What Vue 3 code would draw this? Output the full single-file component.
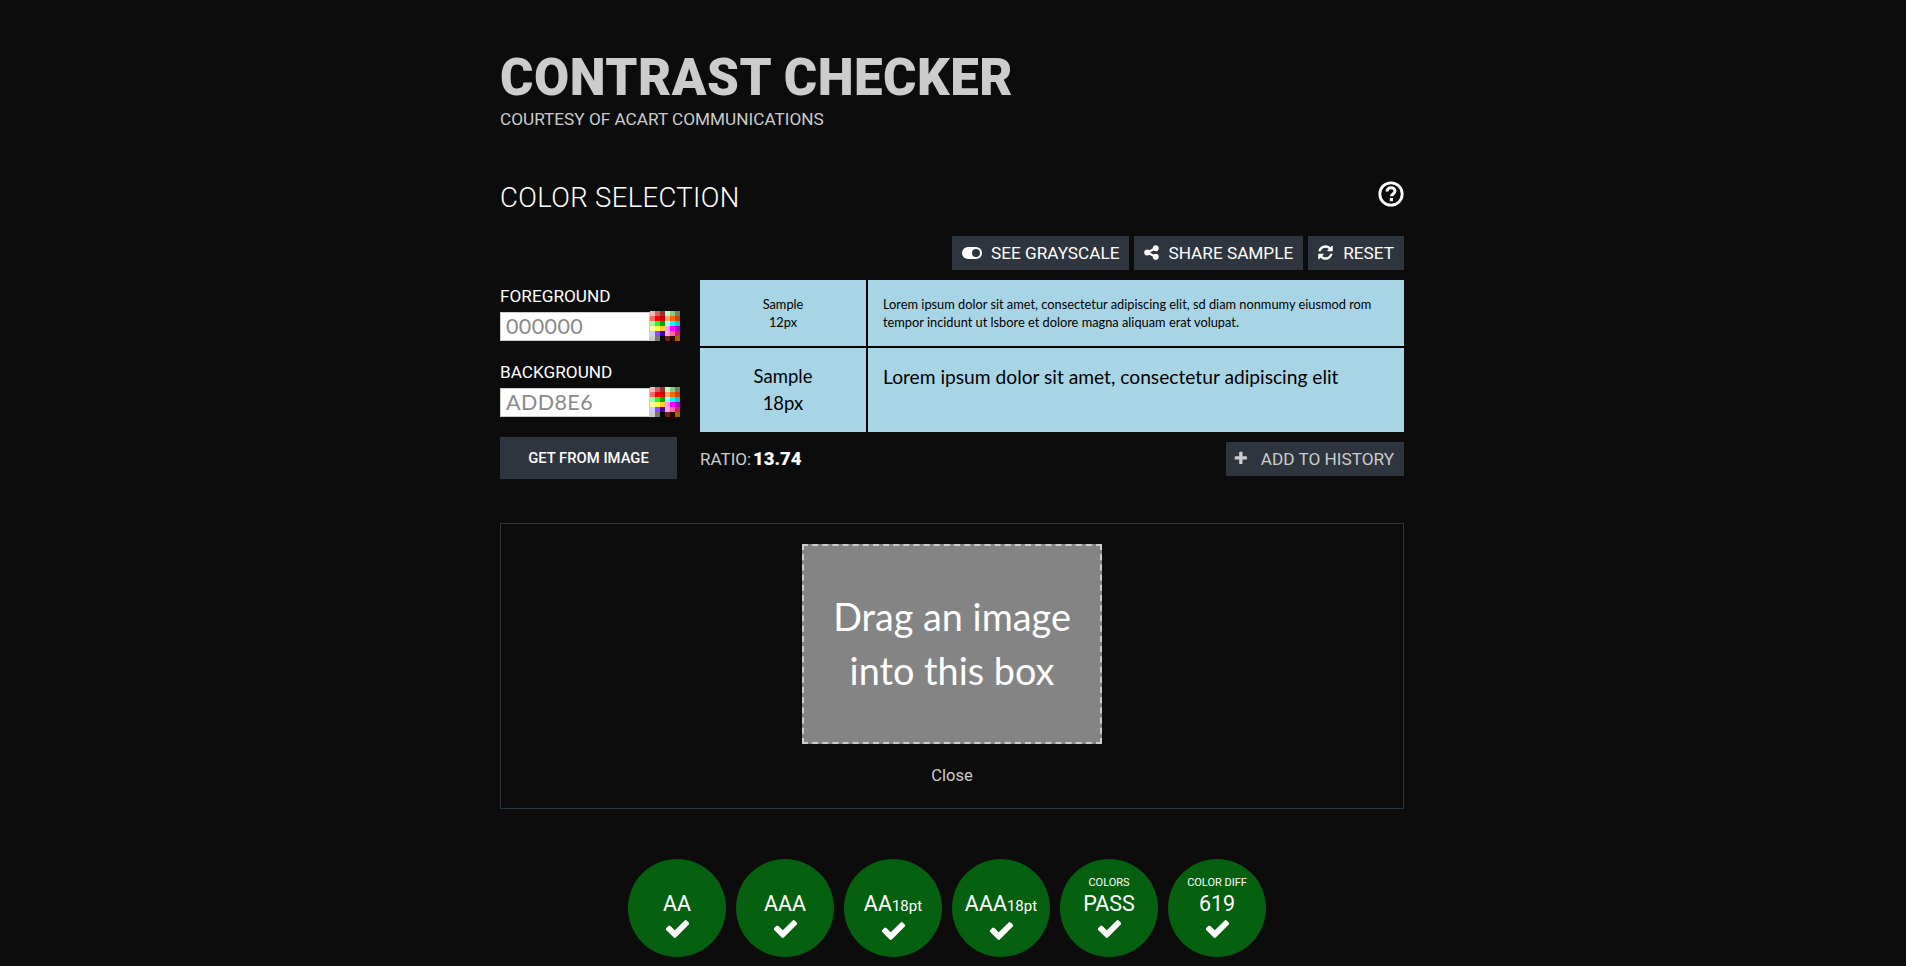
<script setup>
import { ref } from 'vue'

defineOptions({
  name: 'ContrastChecker'
})

const foreground = ref('')
const background = ref('')

// Palette behind the colour picker buttons
const palette = [
  '#f4b8b8', '#c96666', '#993333', '#bbffbb', '#88cc88', '#668866',
  '#ff6666', '#ff0000', '#cc0000', '#ffaa77', '#ff6600', '#cc4400',
  '#99ff99', '#33ee33', '#00aa00', '#aaffff', '#00ffff', '#00cccc',
  '#ffff99', '#ffff44', '#ffcc33', '#ff99ff', '#ff00ff', '#aa00cc',
  '#ccccff', '#9944ff', '#4400aa', '#ffaacc', '#ff66aa', '#cc2266',
  '#cccccc', '#777777', '#000000', '#662222', '#330000', '#996600'
]

const badges = [
  { label: 'AA' },
  { label: 'AAA' },
  { label: 'AA', small: '18pt' },
  { label: 'AAA', small: '18pt' },
  { top: 'COLORS', label: 'PASS' },
  { top: 'COLOR DIFF', label: '619' }
]

const checkPath = 'M1671 566q0 40-28 68l-724 724-136 136q-28 28-68 28t-68-28l-136-136-362-362q-28-28-28-68t28-68l136-136q28-28 68-28t68 28l294 295 656-657q28-28 68-28t68 28l136 136q28 28 28 68z'
</script>

<template>
  <div class="page">
    <header class="page-header">
      <h1>CONTRAST CHECKER</h1>
      <p>COURTESY OF ACART COMMUNICATIONS</p>
    </header>

    <div class="section-head">
      <h2>COLOR SELECTION</h2>
      <svg class="help-icon" viewBox="0 0 26 26" aria-label="Help">
        <circle cx="13" cy="13" r="11.2" fill="none" stroke="#fff" stroke-width="2.8" />
        <path d="M9 10.400c0-2.200 1.800-3.600 4-3.600s4 1.300 4 3.300c0 2.900-3.600 2.900-3.600 5.200" fill="none" stroke="#fff" stroke-width="3" />
        <rect x="11.800" y="17" width="3.200" height="3.200" fill="#fff" />
      </svg>
    </div>

    <div class="toolbar">
      <button type="button" class="btn">
        <svg class="toggle" viewBox="0 0 20 12">
          <rect width="20" height="12" rx="6" fill="#fff" />
          <circle cx="14" cy="6" r="4" fill="#2f353e" />
        </svg>
        SEE GRAYSCALE
      </button>
      <button type="button" class="btn">
        <svg class="btn-icon" viewBox="0 0 1792 1792">
          <path fill="#fff" d="M1344 1024q133 0 226.500 93.500t93.500 226.500-93.500 226.500-226.500 93.500-226.500-93.500-93.500-226.500q0-12 2-34l-360-180q-92 86-218 86-133 0-226.500-93.500t-93.500-226.500 93.500-226.500 226.500-93.500q126 0 218 86l360-180q-2-22-2-34 0-133 93.500-226.500t226.500-93.500 226.500 93.500 93.500 226.500-93.500 226.500-226.500 93.500q-126 0-218-86l-360 180q2 22 2 34t-2 34l360 180q92-86 218-86z" />
        </svg>
        SHARE SAMPLE
      </button>
      <button type="button" class="btn">
        <svg class="btn-icon reset-icon" viewBox="0 0 1792 1792">
          <path fill="#fff" d="M1639 1056q0 5-1 7-64 268-268 434.500t-478 166.500q-146 0-282.500-55t-243.500-157l-129 129q-19 19-45 19t-45-19-19-45v-448q0-26 19-45t45-19h448q26 0 45 19t19 45-19 45l-137 137q71 66 161 102t187 36q134 0 250-65t186-179q11-17 53-117 8-23 30-23h192q13 0 22.500 9.500t9.500 22.500zm25-800v448q0 26-19 45t-45 19h-448q-26 0-45-19t-19-45 19-45l138-138q-148-137-349-137-134 0-250 65t-186 179q-11 17-53 117-8 23-30 23h-199q-13 0-22.500-9.500t-9.500-22.500v-7q65-268 270-434.500t480-166.500q146 0 284 55.500t245 156.500l130-129q19-19 45-19t45 19 19 45z" />
        </svg>
        RESET
      </button>
    </div>

    <div class="workspace">
      <div class="pickers">
        <label class="field-label" for="fg">FOREGROUND</label>
        <div class="field">
          <input id="fg" v-model="foreground" class="hex-input" type="text" placeholder="000000" />
          <div class="swatches">
            <span v-for="c in palette" :key="c" :style="{ background: c }"></span>
          </div>
        </div>
        <label class="field-label second" for="bg">BACKGROUND</label>
        <div class="field">
          <input id="bg" v-model="background" class="hex-input" type="text" placeholder="ADD8E6" />
          <div class="swatches">
            <span v-for="c in palette" :key="c" :style="{ background: c }"></span>
          </div>
        </div>
        <button type="button" class="btn image-btn">GET FROM IMAGE</button>
      </div>

      <div class="samples-col">
        <div class="samples">
          <div class="cell small center">Sample<br />12px</div>
          <div class="cell small text">
            <span>Lorem ipsum dolor sit amet, consectetur adipiscing elit, sd diam nonmumy eiusmod rom tempor incidunt ut lsbore et dolore magna aliquam erat volupat.</span>
          </div>
          <div class="cell large center">Sample<br />18px</div>
          <div class="cell large text">Lorem ipsum dolor sit amet, consectetur adipiscing elit</div>
        </div>
        <div class="result-row">
          <div class="ratio">RATIO:<strong>13.74</strong></div>
          <button type="button" class="btn add-btn">
            <svg class="plus" viewBox="0 0 1792 1792">
              <path fill="#ccc" d="M1600 736v192q0 40-28 68t-68 28h-416v416q0 40-28 68t-68 28h-192q-40 0-68-28t-28-68v-416h-416q-40 0-68-28t-28-68v-192q0-40 28-68t68-28h416v-416q0-40 28-68t68-28h192q40 0 68 28t28 68v416h416q40 0 68 28t28 68z" />
            </svg>
            ADD TO HISTORY
          </button>
        </div>
      </div>
    </div>

    <section class="image-panel">
      <div class="drop-zone">Drag an image<br />into this box</div>
      <a class="close-link">Close</a>
    </section>

    <div class="badges">
      <div v-for="b in badges" :key="b.label + b.small + b.top" class="badge">
        <span v-if="b.top" class="badge-top">{{ b.top }}</span>
        <span class="badge-label">{{ b.label }}<small v-if="b.small">{{ b.small }}</small></span>
        <svg class="badge-check" viewBox="0 0 1792 1792">
          <path fill="#fff" :d="checkPath" />
        </svg>
      </div>
    </div>
  </div>
</template>

<style>
html, body {
  background: #0c0c0c;
}
</style>

<style scoped>
/* Page */
.page {
  width: 906px;
  margin: 0 auto;
  height: 966px;
  overflow: hidden;
  box-sizing: border-box;
  padding: 51px 2px 0 0;
  font-family: 'Lato', sans-serif;
  color: #fff;
}

/* Header */
.page-header h1 {
  margin: 0;
  font-family: 'Roboto', sans-serif;
  font-size: 51px;
  font-weight: 900;
  line-height: 54px;
  letter-spacing: 0.5px;
  color: #cccccc;
}
.page-header p {
  margin: 3px 0 0;
  font-family: 'Roboto', sans-serif;
  font-size: 17.2px;
  line-height: 22px;
  color: #cccccc;
}

.section-head {
  display: flex;
  justify-content: space-between;
  align-items: flex-start;
  margin-top: 51px;
}
.section-head h2 {
  margin: 0;
  font-family: 'Roboto', sans-serif;
  font-size: 27.5px;
  font-weight: 300;
  letter-spacing: 0.35px;
  line-height: 34px;
}
.help-icon {
  width: 26px;
  height: 26px;
}

/* Buttons */
.toolbar {
  display: flex;
  justify-content: flex-end;
  gap: 5px;
  margin-top: 21px;
}
.btn {
  display: flex;
  align-items: center;
  justify-content: center;
  height: 34px;
  padding: 0 10px 1px;
  border: none;
  background: #2f353e;
  color: #fff;
  font-family: 'Roboto', sans-serif;
  font-size: 17.2px;
  white-space: nowrap;
}
.btn-icon {
  width: 17px;
  height: 17px;
  margin: 0 8px 0 -1px;
}
.reset-icon {
  margin-right: 9px;
}
.toggle {
  width: 20px;
  height: 12px;
  margin-right: 9px;
}

/* Workspace */
.workspace {
  display: grid;
  grid-template-columns: 200px 1fr;
  margin-top: 10px;
}
.pickers {
  display: flex;
  flex-direction: column;
  align-items: flex-start;
}
.field-label {
  margin-top: 7px;
  font-family: 'Roboto', sans-serif;
  font-size: 17.2px;
  line-height: 19px;
  height: 24px;
}
.field-label.second {
  margin-top: 22px;
}
.field {
  display: flex;
  align-items: flex-end;
}
.hex-input {
  width: 150px;
  height: 29px;
  box-sizing: border-box;
  padding: 0 5px 2px;
  border: 1px solid #ccc;
  border-radius: 0;
  outline: none;
  background: #fff;
  font-family: 'Lato', sans-serif;
  font-size: 21.5px;
  letter-spacing: 0.4px;
}
.hex-input::placeholder {
  color: #8a8a8a;
  opacity: 1;
}
.swatches {
  display: grid;
  grid-template-columns: repeat(6, 5px);
  grid-template-rows: repeat(6, 5px);
}
.image-btn {
  width: 177px;
  height: 42px;
  margin-top: 20px;
  font-size: 14.8px;
  font-weight: 500;
}

/* Samples */
.samples {
  display: grid;
  grid-template-columns: 166px 1fr;
  grid-template-rows: 66px 84px;
  gap: 2px;
  background: #000;
  color: #000;
}
.cell {
  background: #a8d5e5;
  display: flex;
  align-items: center;
}
.cell.center {
  justify-content: center;
  text-align: center;
}
.cell.small {
  font-size: 12.8px;
  line-height: 18px;
}
.cell.large {
  font-size: 19.2px;
  line-height: 27px;
}
.cell.large.center {
  font-size: 18.5px;
}
.cell.text {
  padding: 0 15px;
}
.cell.large.text {
  align-items: flex-start;
  padding-top: 15px;
}
.result-row {
  display: flex;
  justify-content: space-between;
  align-items: center;
  margin-top: 10px;
}
.ratio {
  font-family: 'Roboto', sans-serif;
  font-size: 17px;
  color: #ccc;
}
.ratio strong {
  margin-left: 2px;
  font-size: 18.5px;
  font-weight: 900;
  color: #fff;
}
.add-btn {
  width: 178px;
  justify-content: flex-start;
  color: #ccc;
}
.plus {
  width: 17px;
  height: 17px;
  margin: 0 12px 0 -3px;
}

/* Image panel */
.image-panel {
  margin-top: 44px;
  height: 286px;
  box-sizing: border-box;
  border: 1px solid #2f353e;
  padding-top: 20px;
  display: flex;
  flex-direction: column;
  align-items: center;
}
.drop-zone {
  width: 300px;
  height: 200px;
  box-sizing: border-box;
  border: 2px dashed #ccc;
  background: #848484;
  display: flex;
  align-items: center;
  justify-content: center;
  text-align: center;
  font-size: 37.8px;
  line-height: 54px;
}
.close-link {
  margin-top: 21px;
  font-family: 'Roboto', sans-serif;
  font-size: 16.5px;
  line-height: 22px;
  color: #ccc;
}

/* Result badges */
.badges {
  display: flex;
  justify-content: center;
  gap: 10px;
  padding-right: 10px;
  margin-top: 50px;
}
.badge {
  position: relative;
  width: 98px;
  height: 98px;
  border-radius: 50%;
  background: #056010;
  display: flex;
  flex-direction: column;
  align-items: center;
  font-family: 'Roboto', sans-serif;
}
.badge-top {
  position: absolute;
  top: 17px;
  font-size: 11px;
  line-height: 14px;
}
.badge-label {
  margin-top: 33px;
  font-size: 21.5px;
  line-height: 24px;
}
.badge-label small {
  font-size: 15px;
}
.badge-check {
  width: 27px;
  height: 27px;
  margin-top: -1px;
}
</style>
